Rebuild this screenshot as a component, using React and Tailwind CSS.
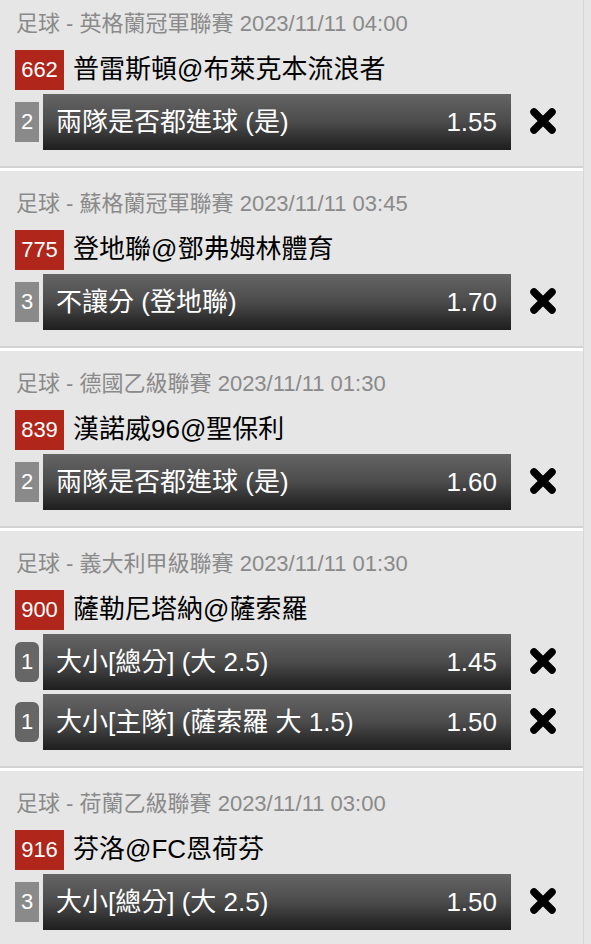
import React from "react";

const FONT = { fontFamily: '"Liberation Sans", Arial, "Noto Sans CJK TC", sans-serif' };

const data = [
  {
    league: "足球 - 英格蘭冠軍聯賽 2023/11/11 04:00",
    no: "662",
    match: "普雷斯頓@布萊克本流浪者",
    bets: [{ n: "2", text: "兩隊是否都進球 (是)", odds: "1.55" }],
  },
  {
    league: "足球 - 蘇格蘭冠軍聯賽 2023/11/11 03:45",
    no: "775",
    match: "登地聯@鄧弗姆林體育",
    bets: [{ n: "3", text: "不讓分 (登地聯)", odds: "1.70" }],
  },
  {
    league: "足球 - 德國乙級聯賽 2023/11/11 01:30",
    no: "839",
    match: "漢諾威96@聖保利",
    bets: [{ n: "2", text: "兩隊是否都進球 (是)", odds: "1.60" }],
  },
  {
    league: "足球 - 義大利甲級聯賽 2023/11/11 01:30",
    no: "900",
    match: "薩勒尼塔納@薩索羅",
    rounded: true,
    bets: [
      { n: "1", text: "大小[總分] (大 2.5)", odds: "1.45" },
      { n: "1", text: "大小[主隊] (薩索羅 大 1.5)", odds: "1.50" },
    ],
  },
  {
    league: "足球 - 荷蘭乙級聯賽 2023/11/11 03:00",
    no: "916",
    match: "芬洛@FC恩荷芬",
    bets: [{ n: "3", text: "大小[總分] (大 2.5)", odds: "1.50" }],
  },
];

function XIcon() {
  return (
    <svg width="28" height="28" viewBox="0 0 28 28">
      <path
        d="M5 5 L23 23 M23 5 L5 23"
        stroke="#000"
        strokeWidth="7.5"
        strokeLinecap="round"
        fill="none"
      />
    </svg>
  );
}

function Section({ s, first }) {
  return (
    <div>
      <div className={`px-[15px] pb-[16px] ${first ? "pt-[12px]" : "pt-[21px]"}`}>
        <div className="text-[22px] leading-[24px] text-[#8a8a8a] pl-[1px] whitespace-nowrap">
          {s.league}
        </div>
        <div className="mt-[14px] flex items-center h-[40px]">
          <div className="h-[40px] w-[49px] bg-[#b0261b] text-white text-[22px] leading-none flex items-center justify-center">
            {s.no}
          </div>
          <div className="ml-[9px] text-[26px] text-black leading-none whitespace-nowrap -mt-[2px]">
            {s.match}
          </div>
        </div>
        {s.bets.map((b, i) => (
          <div key={i} className="mt-[4px] flex items-center h-[56px]">
            <div
              className={`h-[40px] w-[24px] text-white text-[22px] leading-none flex items-center justify-center ${
                s.rounded ? "bg-[#666666] rounded-[6px]" : "bg-[#8a8a8a]"
              }`}
            >
              {b.n}
            </div>
            <div className="ml-[4px] w-[468px] h-[56px] bg-gradient-to-b from-[#656565] via-[#4b4b4b] to-[#1e1e1e] flex items-center justify-between pl-[13px] pr-[14px] text-white text-[26px] leading-none">
              <span className="whitespace-nowrap">{b.text}</span>
              <span>{b.odds}</span>
            </div>
            <div className="ml-[18px] flex items-center justify-center w-[28px] h-[28px] -mt-[2px]">
              <XIcon />
            </div>
          </div>
        ))}
      </div>
      <div className="h-[2px] bg-[#d2d2d2]" />
      <div className="h-[3px] bg-white" />
    </div>
  );
}

export default function App() {
  return (
    <div className="w-[591px] h-[944px] overflow-hidden bg-[#e6e6e6]" style={FONT}>
      <div className="w-[584px] border-r border-[#d8d8d8] bg-[#e6e6e6]">
        {data.map((s, i) => (
          <Section key={i} s={s} first={i === 0} />
        ))}
      </div>
    </div>
  );
}
